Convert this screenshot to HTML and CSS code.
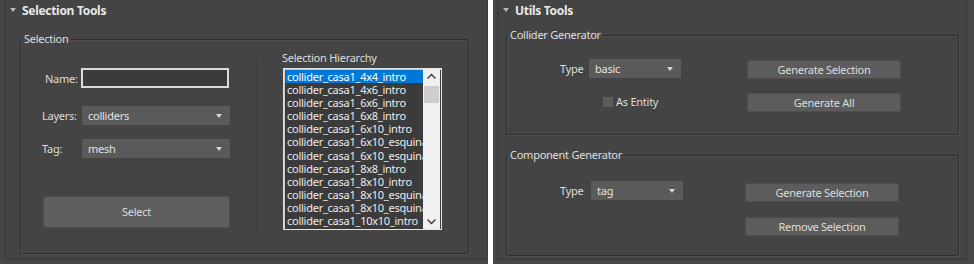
FILE: index.html
```html
<!DOCTYPE html>
<html lang="en">
  <head>
    <meta charset="UTF-8" />
    <title>Tools</title>
    <link rel="stylesheet" href="styles.css">
  </head>
  <body>
    <div class="panels">
      <div class="bay bay-left">
        <section class="rollout">
          <div class="roll-head">
            <span class="tri"></span>
            <span class="roll-title">Selection Tools</span>
            <span class="grip"></span>
          </div>

          <fieldset class="group sel-group">
            <legend>Selection</legend>
            <div class="sel-body">
              <div class="sel-left">
                <div class="row name-row">
                  <label class="lbl lbl-name">Name:</label>
                  <div class="textbox"></div>
                </div>
                <div class="row layers-row">
                  <label class="lbl lbl-wide">Layers:</label>
                  <div class="combo combo-wide">colliders<span class="arrow"></span></div>
                </div>
                <div class="row tag-row">
                  <label class="lbl lbl-wide">Tag:</label>
                  <div class="combo combo-wide">mesh<span class="arrow"></span></div>
                </div>
                <div class="btn btn-select">Select</div>
              </div>

              <div class="sep"></div>

              <div class="sel-right">
                <div class="hier-label">Selection Hierarchy</div>
                <div class="listbox">
                  <ul class="items">
                    <li class="on">collider_casa1_4x4_intro</li>
                    <li>collider_casa1_4x6_intro</li>
                    <li>collider_casa1_6x6_intro</li>
                    <li>collider_casa1_6x8_intro</li>
                    <li>collider_casa1_6x10_intro</li>
                    <li>collider_casa1_6x10_esquina</li>
                    <li>collider_casa1_6x10_esquina</li>
                    <li>collider_casa1_8x8_intro</li>
                    <li>collider_casa1_8x10_intro</li>
                    <li>collider_casa1_8x10_esquina</li>
                    <li>collider_casa1_8x10_esquina</li>
                    <li>collider_casa1_10x10_intro</li>
                  </ul>
                  <div class="vscroll">
                    <svg class="chev" width="17" height="16" viewBox="0 0 17 16"><polyline points="4.5,9.5 8.5,5.5 12.5,9.5" fill="none" stroke="#3a3a3a" stroke-width="1.4"/></svg>
                    <div class="thumb"></div>
                    <div class="track"></div>
                    <svg class="chev" width="17" height="16" viewBox="0 0 17 16"><polyline points="4.5,6.5 8.5,10.5 12.5,6.5" fill="none" stroke="#3a3a3a" stroke-width="1.4"/></svg>
                  </div>
                </div>
              </div>
            </div>
          </fieldset>
        </section>
      </div>

      <div class="bay bay-right">
        <section class="rollout">
          <div class="roll-head">
            <span class="tri"></span>
            <span class="roll-title">Utils Tools</span>
            <span class="grip"></span>
          </div>

          <fieldset class="group util-group collider-group">
            <legend>Collider Generator</legend>
            <div class="util-body">
              <div class="util-left">
                <div class="row type-row">
                  <label class="lbl lbl-type">Type</label>
                  <div class="combo combo-small">basic<span class="arrow"></span></div>
                </div>
                <div class="row check-row">
                  <span class="checkbox"></span>
                  <span class="check-text">As Entity</span>
                </div>
              </div>
              <div class="util-right">
                <div class="btn btn-small">Generate Selection</div>
                <div class="btn btn-small">Generate All</div>
              </div>
            </div>
          </fieldset>

          <fieldset class="group util-group component-group">
            <legend>Component Generator</legend>
            <div class="util-body">
              <div class="util-left comp-left">
                <div class="row type-row">
                  <label class="lbl lbl-type2">Type</label>
                  <div class="combo combo-small">tag<span class="arrow"></span></div>
                </div>
              </div>
              <div class="util-right comp-right">
                <div class="btn btn-small">Generate Selection</div>
                <div class="btn btn-small">Remove Selection</div>
              </div>
            </div>
          </fieldset>
        </section>
      </div>
    </div>
  </body>
</html>
```

FILE: styles.css
```css
* {
  box-sizing: border-box;
}

body {
  margin: 0;
  background: #ffffff;
  font-family: "Noto Sans", "Open Sans", "DejaVu Sans", sans-serif;
  font-size: 11px;
  letter-spacing: -0.25px;
  color: #dcdcdc;
}

.panels {
  display: flex;
  height: 264px;
  gap: 5px;
}

.bay {
  height: 264px;
  background: #474747;
  display: flex;
}

.bay-left {
  width: 488px;
  padding: 0 0 4px 4px;
}

.bay-right {
  width: 481px;
  padding: 0 7px 4px 4px;
}

.rollout {
  flex: 1;
  background: #444444;
  border: 1px solid #383838;
  border-top: none;
}

.roll-head {
  height: 22px;
  display: flex;
  align-items: center;
  padding-left: 5px;
}

.tri {
  width: 0;
  height: 0;
  border-left: 3px solid transparent;
  border-right: 3px solid transparent;
  border-top: 4px solid #b8b8b8;
  margin-top: -3px;
}

.roll-title {
  font-size: 12px;
  font-weight: bold;
  letter-spacing: -0.3px;
  color: #e8e8e8;
  margin-left: 6px;
  margin-top: -1px;
}

.grip {
  margin-left: auto;
  margin-right: 8px;
  margin-top: -4px;
  width: 5px;
  height: 5px;
  background-image: radial-gradient(circle, #8a8a8a 0.6px, transparent 0.7px);
  background-size: 2px 2px;
}

/* group boxes */

.group {
  margin: 0;
  padding: 0;
  border: 1px solid #2f2f2f;
  border-radius: 2px;
  box-shadow: 1px 1px 0 #505050, inset 1px 1px 0 #505050;
}

.group legend {
  margin-left: 1px;
  padding: 0 2px;
  line-height: 16px;
  color: #dedede;
}

.sel-group {
  margin: 9px 0 0 15px;
  width: 449px;
  height: 223px;
}

.sel-body {
  display: flex;
}

.sel-left {
  width: 236px;
}

.row {
  display: flex;
  align-items: center;
}

.lbl {
  flex: none;
}

.name-row {
  margin-top: 21px;
  margin-left: 24px;
}

.lbl-name {
  width: 36px;
}

.layers-row {
  margin-top: 18px;
  margin-left: 21px;
}

.tag-row {
  margin-top: 14px;
  margin-left: 21px;
}

.lbl-wide {
  width: 40px;
}

.textbox {
  width: 148px;
  height: 20px;
  background: #3b3b3b;
  border: 2px solid #dadada;
}

.combo {
  position: relative;
  height: 19px;
  background: #5a5a5a;
  line-height: 19px;
  padding-left: 6px;
  color: #e2e2e2;
}

.combo-wide {
  width: 148px;
}

.combo-small {
  width: 92px;
}

.arrow {
  position: absolute;
  right: 8px;
  top: 8px;
  width: 0;
  height: 0;
  border-left: 3px solid transparent;
  border-right: 3px solid transparent;
  border-top: 4px solid #d8d8d8;
}

.btn {
  background: #5c5c5c;
  border: 1px solid #4e4e4e;
  border-radius: 2px;
  text-align: center;
  color: #dcdcdc;
}

.btn-select {
  margin: 38px 0 0 22px;
  width: 187px;
  height: 32px;
  line-height: 30px;
  background: #5f5f5f;
}

.sep {
  margin-top: 10px;
  width: 2px;
  height: 179px;
  border-left: 1px solid #383838;
  border-right: 1px solid #4d4d4d;
}

.sel-right {
  padding-left: 23px;
}

.hier-label {
  margin-top: 4px;
  line-height: 14px;
}

.listbox {
  margin: 3px 0 0 1px;
  width: 159px;
  height: 162px;
  border: 1px solid #e4e4e4;
  box-shadow: inset 1px 1px 0 #c8c8c8;
  background: #3b3b3b;
  display: flex;
  overflow: hidden;
}

.items {
  margin: 0;
  padding: 1px 0 0 1px;
  list-style: none;
  width: 139px;
  overflow: hidden;
  white-space: nowrap;
}

.items li {
  height: 13.1px;
  line-height: 13px;
  padding-left: 2px;
  color: #ececec;
}

.items li.on {
  background: #0078d7;
  color: #ffffff;
}

.vscroll {
  width: 17px;
  background: #f0f0f0;
  display: flex;
  flex-direction: column;
}

.chev {
  display: block;
  flex: none;
}

.thumb {
  margin: 1px 1px 0;
  height: 17px;
  background: #cdcdcd;
}

.track {
  flex: 1;
}

/* utils */

.util-group {
  margin-left: 8px;
  width: 453px;
}

.collider-group {
  margin-top: 5px;
  height: 108px;
}

.component-group {
  margin-top: 12px;
  height: 109px;
}

.util-body {
  display: flex;
}

.util-left {
  width: 240px;
}

.type-row {
  margin-top: 16px;
  margin-left: 53px;
}

.lbl-type {
  width: 29px;
}

.lbl-type2 {
  width: 31px;
}

.check-row {
  margin-top: 17px;
  margin-left: 96px;
  line-height: 14px;
}

.checkbox {
  width: 10px;
  height: 10px;
  background: #5c5c5c;
  margin-right: 3px;
}

.util-right {
  padding-top: 17px;
  display: flex;
  flex-direction: column;
  gap: 14px;
}

.btn-small {
  width: 154px;
  height: 19px;
  line-height: 17px;
}

.comp-left {
  width: 238px;
}

.comp-left .type-row {
  margin-top: 18px;
}

.comp-right {
  padding-top: 20px;
  gap: 15px;
}
```
